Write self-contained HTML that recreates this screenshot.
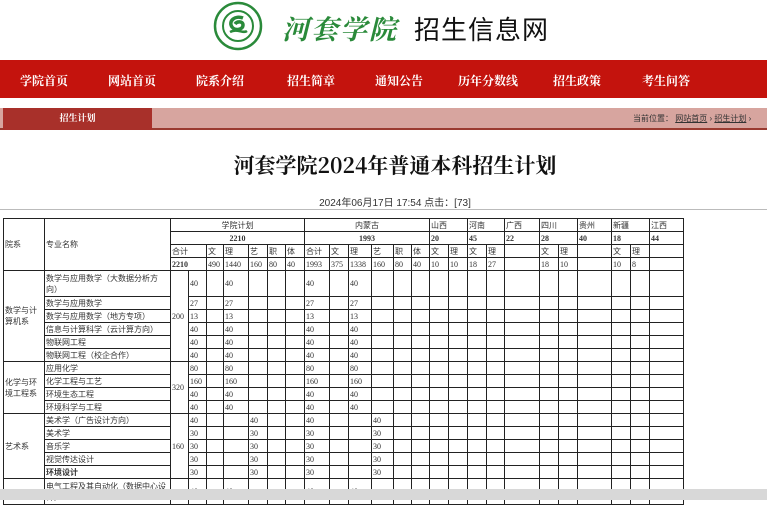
<!DOCTYPE html>
<html><head><meta charset="utf-8"><style>
*{margin:0;padding:0;box-sizing:border-box}
body{width:767px;height:500px;overflow:hidden;background:#fff;font-family:"Liberation Sans","Noto Sans CJK SC",sans-serif;position:relative}
.abs{position:absolute}
.nav{left:0;top:60px;width:767px;height:38px;background:#c4130d}
.nav span{position:absolute;top:12px;color:#fff;font:bold 12px "Liberation Serif","Noto Serif CJK SC",serif;white-space:nowrap}
table{position:absolute;left:3px;top:218px;border-collapse:collapse;table-layout:fixed;width:679px;font-size:8px;color:#333;font-family:"Liberation Serif","Noto Sans CJK SC",serif}
td{border:1px solid #222;padding:0 1px;height:13px;line-height:11px;overflow:hidden;white-space:nowrap;vertical-align:middle}
td.w{white-space:normal}
.c{text-align:center}
.b{font-weight:bold}
</style></head><body>
<svg class="abs" style="left:213px;top:1px" width="50" height="50" viewBox="0 0 50 50">
<circle cx="25" cy="25" r="23" fill="#fff" stroke="#2a8a3a" stroke-width="2.5"/>
<circle cx="25" cy="25" r="15" fill="#fff" stroke="#2a8a3a" stroke-width="2"/>
<path d="M30 17 C22 14 15 20 19 26 C22 30 30 29 30 24 C30 20 24 20 22 23" fill="none" stroke="#2a8a3a" stroke-width="3.5"/>
<path d="M17 31 C24 27 30 33 34 30" fill="none" stroke="#2a8a3a" stroke-width="2.5"/>
</svg>
<div class="abs" style="left:282px;top:8px;font:italic bold 27px 'Noto Serif CJK SC',serif;color:#2a8a3a;letter-spacing:2px">河套学院</div>
<div class="abs" style="left:414px;top:10px;font-size:26px;color:#111;font-family:'Noto Sans CJK SC',sans-serif;letter-spacing:1px">招生信息网</div>
<div class="abs nav">
<span style="left:20px">学院首页</span><span style="left:108px">网站首页</span><span style="left:196px">院系介绍</span><span style="left:287px">招生简章</span><span style="left:375px">通知公告</span><span style="left:458px">历年分数线</span><span style="left:553px">招生政策</span><span style="left:642px">考生问答</span>
</div>
<div class="abs" style="left:0;top:108px;width:767px;height:22px;background:#d7a59f;border-bottom:2px solid #9a3a30"></div>
<div class="abs" style="left:3px;top:108px;width:149px;height:22px;background:#a8302a;color:#fff;font:bold 9px 'Noto Serif CJK SC',serif;text-align:center;line-height:20px">招生计划</div>
<div class="abs" style="left:633px;top:113px;font-size:8px;color:#333;white-space:nowrap">当前位置： <u>网站首页</u> › <u>招生计划</u> › </div>
<div class="abs" style="left:0;top:150px;width:790px;text-align:center;font:bold 21px 'Noto Serif CJK SC',serif;color:#111">河套学院2024年普通本科招生计划</div>
<div class="abs" style="left:0;top:194px;width:790px;text-align:center;font-size:10px;color:#333">2024年06月17日 17:54 点击：[73]</div>
<div class="abs" style="left:0;top:209px;width:767px;height:1px;background:#bbb"></div>
<table>
<colgroup><col style="width:41px"><col style="width:126px"><col style="width:18px"><col style="width:18px"><col style="width:17px"><col style="width:25px"><col style="width:19px"><col style="width:18px"><col style="width:19px"><col style="width:25px"><col style="width:19px"><col style="width:23px"><col style="width:22px"><col style="width:18px"><col style="width:18px"><col style="width:19px"><col style="width:19px"><col style="width:19px"><col style="width:18px"><col style="width:35px"><col style="width:19px"><col style="width:19px"><col style="width:34px"><col style="width:19px"><col style="width:19px"><col style="width:34px"></colgroup>
<tr><td rowspan="4">院系</td><td rowspan="4">专业名称</td><td colspan="7" class="c">学院计划</td><td colspan="6" class="c">内蒙古</td><td colspan="2">山西</td><td colspan="2">河南</td><td>广西</td><td colspan="2">四川</td><td>贵州</td><td colspan="2">新疆</td><td>江西</td></tr>
<tr><td colspan="7" class="c b">2210</td><td colspan="6" class="c b">1993</td><td colspan="2" class="b">20</td><td colspan="2" class="b">45</td><td class="b">22</td><td colspan="2" class="b">28</td><td class="b">40</td><td colspan="2" class="b">18</td><td class="b">44</td></tr>
<tr><td colspan="2">合计</td><td>文</td><td>理</td><td>艺</td><td>职</td><td>体</td><td>合计</td><td>文</td><td>理</td><td>艺</td><td>职</td><td>体</td><td>文</td><td>理</td><td>文</td><td>理</td><td></td><td>文</td><td>理</td><td></td><td>文</td><td>理</td><td></td></tr>
<tr><td colspan="2" class="b">2210</td><td>490</td><td>1440</td><td>160</td><td>80</td><td>40</td><td>1993</td><td>375</td><td>1338</td><td>160</td><td>80</td><td>40</td><td>10</td><td>10</td><td>18</td><td>27</td><td></td><td>18</td><td>10</td><td></td><td>10</td><td>8</td><td></td></tr>
<tr><td rowspan="6" class="w">数学与计算机系</td><td class="w" style="height:26px">数学与应用数学（大数据分析方向）</td><td rowspan="6">200</td><td>40</td><td></td><td>40</td><td></td><td></td><td></td><td>40</td><td></td><td>40</td><td></td><td></td><td></td><td></td><td></td><td></td><td></td><td></td><td></td><td></td><td></td><td></td><td></td><td></td></tr>
<tr><td>数学与应用数学</td><td>27</td><td></td><td>27</td><td></td><td></td><td></td><td>27</td><td></td><td>27</td><td></td><td></td><td></td><td></td><td></td><td></td><td></td><td></td><td></td><td></td><td></td><td></td><td></td><td></td></tr>
<tr><td>数学与应用数学（地方专项）</td><td>13</td><td></td><td>13</td><td></td><td></td><td></td><td>13</td><td></td><td>13</td><td></td><td></td><td></td><td></td><td></td><td></td><td></td><td></td><td></td><td></td><td></td><td></td><td></td><td></td></tr>
<tr><td>信息与计算科学（云计算方向）</td><td>40</td><td></td><td>40</td><td></td><td></td><td></td><td>40</td><td></td><td>40</td><td></td><td></td><td></td><td></td><td></td><td></td><td></td><td></td><td></td><td></td><td></td><td></td><td></td><td></td></tr>
<tr><td>物联网工程</td><td>40</td><td></td><td>40</td><td></td><td></td><td></td><td>40</td><td></td><td>40</td><td></td><td></td><td></td><td></td><td></td><td></td><td></td><td></td><td></td><td></td><td></td><td></td><td></td><td></td></tr>
<tr><td>物联网工程（校企合作）</td><td>40</td><td></td><td>40</td><td></td><td></td><td></td><td>40</td><td></td><td>40</td><td></td><td></td><td></td><td></td><td></td><td></td><td></td><td></td><td></td><td></td><td></td><td></td><td></td><td></td></tr>
<tr><td rowspan="4" class="w">化学与环境工程系</td><td>应用化学</td><td rowspan="4">320</td><td>80</td><td></td><td>80</td><td></td><td></td><td></td><td>80</td><td></td><td>80</td><td></td><td></td><td></td><td></td><td></td><td></td><td></td><td></td><td></td><td></td><td></td><td></td><td></td><td></td></tr>
<tr><td>化学工程与工艺</td><td>160</td><td></td><td>160</td><td></td><td></td><td></td><td>160</td><td></td><td>160</td><td></td><td></td><td></td><td></td><td></td><td></td><td></td><td></td><td></td><td></td><td></td><td></td><td></td><td></td></tr>
<tr><td>环境生态工程</td><td>40</td><td></td><td>40</td><td></td><td></td><td></td><td>40</td><td></td><td>40</td><td></td><td></td><td></td><td></td><td></td><td></td><td></td><td></td><td></td><td></td><td></td><td></td><td></td><td></td></tr>
<tr><td>环境科学与工程</td><td>40</td><td></td><td>40</td><td></td><td></td><td></td><td>40</td><td></td><td>40</td><td></td><td></td><td></td><td></td><td></td><td></td><td></td><td></td><td></td><td></td><td></td><td></td><td></td><td></td></tr>
<tr><td rowspan="5">艺术系</td><td>美术学（广告设计方向）</td><td rowspan="5">160</td><td>40</td><td></td><td></td><td>40</td><td></td><td></td><td>40</td><td></td><td></td><td>40</td><td></td><td></td><td></td><td></td><td></td><td></td><td></td><td></td><td></td><td></td><td></td><td></td><td></td></tr>
<tr><td>美术学</td><td>30</td><td></td><td></td><td>30</td><td></td><td></td><td>30</td><td></td><td></td><td>30</td><td></td><td></td><td></td><td></td><td></td><td></td><td></td><td></td><td></td><td></td><td></td><td></td><td></td></tr>
<tr><td>音乐学</td><td>30</td><td></td><td></td><td>30</td><td></td><td></td><td>30</td><td></td><td></td><td>30</td><td></td><td></td><td></td><td></td><td></td><td></td><td></td><td></td><td></td><td></td><td></td><td></td><td></td></tr>
<tr><td>视觉传达设计</td><td>30</td><td></td><td></td><td>30</td><td></td><td></td><td>30</td><td></td><td></td><td>30</td><td></td><td></td><td></td><td></td><td></td><td></td><td></td><td></td><td></td><td></td><td></td><td></td><td></td></tr>
<tr><td class="b">环境设计</td><td>30</td><td></td><td></td><td>30</td><td></td><td></td><td>30</td><td></td><td></td><td>30</td><td></td><td></td><td></td><td></td><td></td><td></td><td></td><td></td><td></td><td></td><td></td><td></td><td></td></tr>
<tr><td></td><td class="w" style="height:26px">电气工程及其自动化（数据中心设计）</td><td></td><td>40</td><td></td><td>40</td><td></td><td></td><td></td><td>40</td><td></td><td>40</td><td></td><td></td><td></td><td></td><td></td><td></td><td></td><td></td><td></td><td></td><td></td><td></td><td></td><td></td></tr>
</table>
<div class="abs" style="left:0;top:489px;width:767px;height:11px;background:#d8d8d8;z-index:5"></div>
</body></html>
